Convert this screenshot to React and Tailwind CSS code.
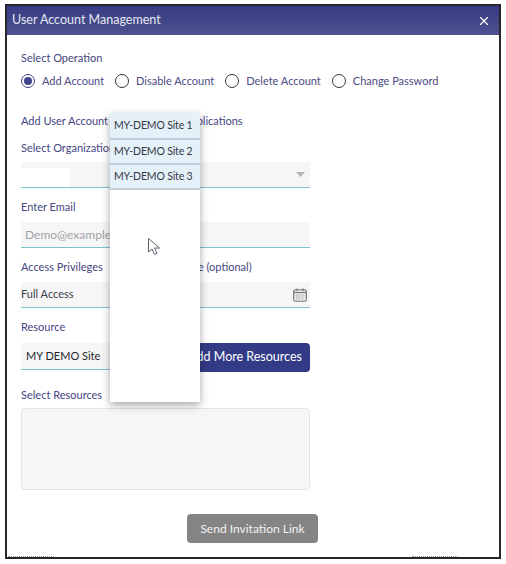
import React from 'react';
import { X } from 'lucide-react';

const labelCls = 'block text-[11px] leading-[14px] text-[#45467f]';
const fieldCls = 'flex items-center h-[26px] bg-[#f6f6f6] border-b border-[#7fc0cc] text-[11px] text-[#3c3c4a]';

const Radio = ({ label, checked }) => (
  <div className="flex items-center gap-[7px]">
    <span className={`flex items-center justify-center w-[14px] h-[14px] rounded-full border-[1.5px] ${checked ? 'border-[#3f4388]' : 'border-[#33343c]'}`}>
      {checked && <span className="w-[8px] h-[8px] rounded-full bg-[#3f4388]" />}
    </span>
    <span className="text-[11px] leading-[14px] text-[#4a4b85]">{label}</span>
  </div>
);

const SiteOption = ({ label, className }) => (
  <div className={`flex items-center pl-[4px] bg-[#e4f1f9] border-b-2 border-[#c3cfd8] text-[10.5px] tracking-[-0.15px] text-[#353545] whitespace-nowrap ${className}`}>
    {label}
  </div>
);

export default function App() {
  return (
    <div className="relative w-[506px] h-[564px] bg-white font-['Lato','Noto_Sans',sans-serif]">
      <div className="mx-[5px] pt-[4px]">
        <div className="h-[555px] border-2 border-[#26262a] bg-white flex flex-col">
          {/* Header */}
          <div className="flex items-center justify-between h-[29px] shrink-0 pl-[5px] pr-[8px] bg-gradient-to-b from-[#373b84] to-[#4d528f] text-white">
            <span className="text-[12.5px] text-[#e6e7f2]">User Account Management</span>
            <X className="w-[14px] h-[14px]" strokeWidth={2} />
          </div>

          {/* Body */}
          <div className="pl-[14px] pt-[16px]">
            <span className={labelCls}>Select Operation</span>
            <div className="flex items-center gap-[11px] mt-[9px]">
              <Radio label="Add Account" checked />
              <Radio label="Disable Account" />
              <Radio label="Delete Account" />
              <Radio label="Change Password" />
            </div>

            <div className="w-[289px]">
              <span className={`${labelCls} mt-[26px]`}>Add User Account to Access Your Applications</span>

              <span className={`${labelCls} mt-[13px]`}>Select Organization</span>
              <div className={`${fieldCls} mt-[7px] justify-between pr-[5px]`}>
                <div className="w-[49px] h-[19px] mt-[6px] bg-white" />
                <svg width="9" height="5" viewBox="0 0 9 5"><path d="M0 0H9L4.5 5Z" fill="#b4b4b8" /></svg>
              </div>

              <span className={`${labelCls} mt-[12px]`}>Enter Email</span>
              <div className={`${fieldCls} mt-[8px] pl-[4px] !text-[#a3a3a8] text-[12px]`}>Demo@example.com</div>

              <div className="grid grid-cols-2 gap-[10px] mt-[12px]">
                <div>
                  <span className={labelCls}>Access Privileges</span>
                  <div className={`${fieldCls} mt-[8px]`}>Full Access</div>
                </div>
                <div>
                  <span className={`${labelCls} -ml-[23px] whitespace-nowrap`}>Expiry Date (optional)</span>
                  <div className={`${fieldCls} mt-[8px] justify-end pr-[3px]`}>
                    <svg width="14" height="14" viewBox="0 0 14 14">
                      <rect x="0.75" y="1.75" width="12.5" height="11.5" rx="1.5" fill="#ececec" stroke="#77777b" strokeWidth="1.2" />
                      <path d="M1 4.5H13" stroke="#77777b" strokeWidth="1.2" />
                      <path d="M4 0.5V3M10 0.5V3" stroke="#77777b" strokeWidth="1.2" />
                      <path d="M3 7H11M3 9H11M3 11H11" stroke="#a2a2a6" strokeWidth="1" strokeDasharray="1.5 1" />
                    </svg>
                  </div>
                </div>
              </div>

              <span className={`${labelCls} mt-[12px]`}>Resource</span>
              <div className="flex gap-[10px] mt-[9px]">
                <div className={`${fieldCls} !h-[27px] flex-1 pl-[5px] !text-[#26262e]`}>MY DEMO Site</div>
                <button className="w-[150px] h-[29px] rounded-[4px] pr-[8px] text-right bg-[#333b87] text-white text-[12.5px] whitespace-nowrap">
                  Add More Resources
                </button>
              </div>

              <span className={`${labelCls} mt-[16px]`}>Select Resources</span>
              <div className="h-[82px] mt-[6px] rounded-[4px] bg-[#f6f6f6] border border-[#e4e4e6]" />
            </div>

            <div className="w-[469px] mt-[24px] pl-[166px]">
              <button className="w-[131px] h-[29px] rounded-[4px] bg-[#848484] text-[#f2f2f2] text-[12px]">
                Send Invitation Link
              </button>
            </div>
          </div>

          {/* Faint marks along the bottom edge */}
          <div className="mt-auto flex justify-between pl-[1px] pr-[41px]">
            <div className="w-[46px] border-b border-dotted border-[#9a9a9a]" />
            <div className="w-[46px] border-b border-dotted border-[#9a9a9a]" />
          </div>
        </div>
      </div>

      {/* Open dropdown */}
      <div className="absolute left-[110px] top-[113px] w-[90px] h-[289px] bg-white shadow-[0_3px_8px_rgba(0,0,0,0.35)]">
        <SiteOption label="MY-DEMO Site 1" className="h-[27px] pt-[1px]" />
        <SiteOption label="MY-DEMO Site 2" className="h-[25px]" />
        <SiteOption label="MY-DEMO Site 3" className="h-[25px]" />
      </div>

      {/* Mouse pointer */}
      <svg className="absolute left-[147px] top-[237px]" width="15" height="20" viewBox="0 0 15 20">
        <path d="M1.5 1.5 L1.5 15 L5 12 L7.5 17.5 L10 16.3 L7.5 11 L12.5 11 Z" fill="#fff" stroke="#5a5f6a" strokeWidth="1" strokeLinejoin="round" />
      </svg>
    </div>
  );
}
